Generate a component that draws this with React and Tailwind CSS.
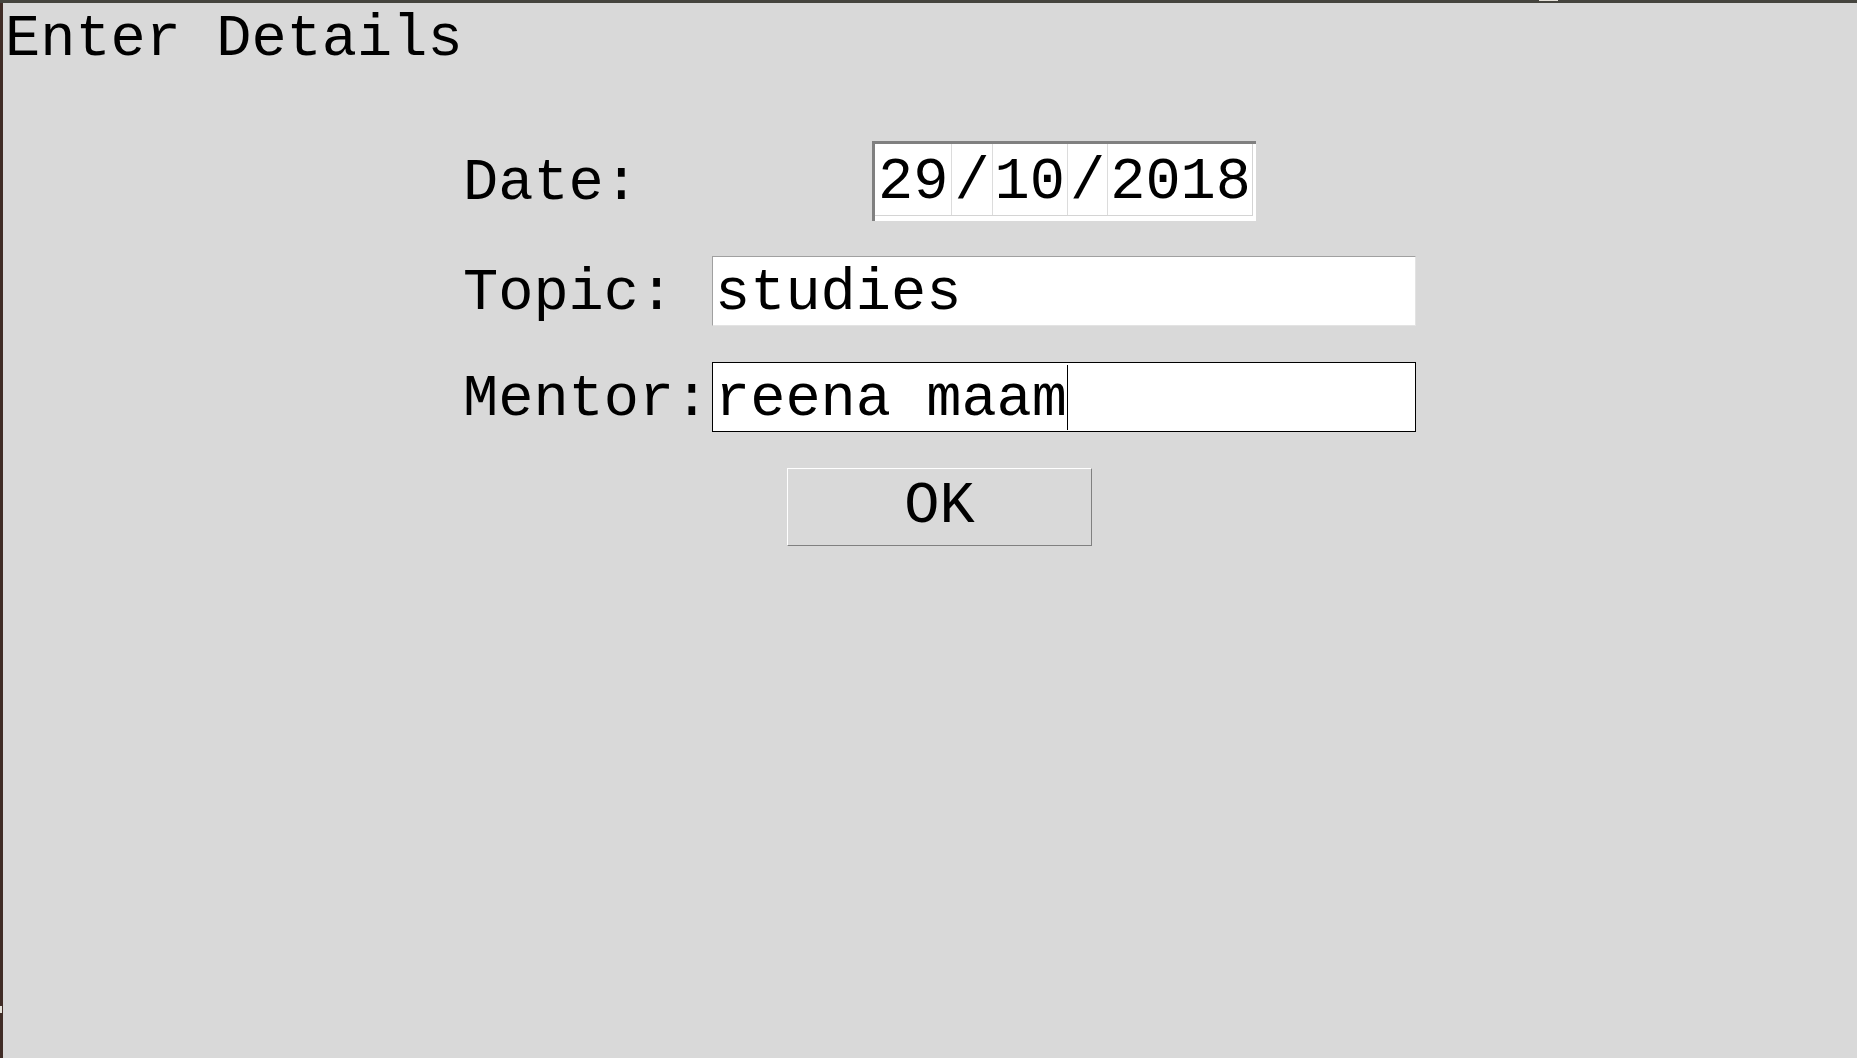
// App.jsx - "Enter Details" dialog (Tk-style form)
const mono =
  "font-['Courier_New','Nimbus_Mono_PS','Nimbus_Mono_L','FreeMono','Courier_10_Pitch','Liberation_Mono',monospace] text-[58.67px] leading-[66px] text-black";

const dateParts = [
  { text: "29", className: "px-[3px] border-r border-[#dcdcdc]" },
  { text: "/", className: "px-[2px] border-r border-[#dcdcdc]" },
  { text: "10", className: "px-[2px] border-r border-[#dcdcdc]" },
  { text: "/", className: "px-[2px] border-r border-[#dcdcdc]" },
  { text: "2018", className: "flex-1 px-[2px]" },
];

function Label({ children }) {
  return <div className={`w-[249px] shrink-0 mt-[6px] whitespace-pre ${mono}`}>{children}</div>;
}

export default function App() {
  return (
    <div className="h-screen w-full flex flex-col bg-[#d9d9d9] overflow-hidden">
      {/* window frame, top */}
      <div className="h-[3px] w-full shrink-0 flex bg-[#45443e]">
        <div className="w-[1539px] shrink-0" />
        <div className="w-[19px] h-[1px] bg-[#e6e2da]" />
      </div>

      <div className="flex-1 flex min-h-0">
        {/* window frame, left */}
        <div className="w-[3px] shrink-0 flex flex-col bg-[#402c26]">
          <div className="h-[1003px] shrink-0" />
          <div className="w-[2px] h-[7px] bg-[#e6e2da]" />
        </div>

        <div className="flex-1 flex flex-col">
          {/* Title */}
          <div className={`pt-[4px] pl-[2px] whitespace-pre ${mono}`}>Enter Details</div>

          {/* Form grid */}
          <div className="mt-[68px] pl-[460px] flex flex-col w-fit">
            {/* Date row */}
            <div className="flex items-center h-[80px]">
              <Label>Date:</Label>
              <div className="w-[704px] flex justify-center">
                <div className="w-[384px] h-[80px] flex flex-col bg-white border-t-[3px] border-l-[3px] border-[#808080] pr-[3px] pb-[5px]">
                  <div className="flex flex-1 border-r border-b border-[#d4d4d4] overflow-hidden">
                    {dateParts.map((part, index) => (
                      <div key={index} className={`pt-[6px] whitespace-pre ${mono} ${part.className}`}>
                        {part.text}
                      </div>
                    ))}
                  </div>
                </div>
              </div>
            </div>

            {/* Topic row */}
            <div className="flex items-center h-[70px] mt-[35px]">
              <Label>Topic:</Label>
              <div className="w-[704px] h-[70px] flex items-center bg-white border-t border-l border-t-[#a0a0a0] border-l-[#a0a0a0] border-b border-r border-b-[#e3e3e3] border-r-[#e3e3e3] pl-[2px]">
                <span className={`mt-[6px] whitespace-pre ${mono}`}>studies</span>
              </div>
            </div>

            {/* Mentor row */}
            <div className="flex items-center h-[70px] mt-[36px]">
              <Label>Mentor:</Label>
              <div className="w-[704px] h-[70px] flex items-center bg-white border border-black pl-[2px]">
                <span className={`mt-[6px] whitespace-pre ${mono}`}>reena maam</span>
                <div className="w-px h-[65px] bg-black" />
              </div>
            </div>

            {/* OK button */}
            <div className="flex justify-center mt-[36px]">
              <button
                type="button"
                className={`w-[305px] h-[78px] flex items-center justify-center bg-[#d9d9d9] border-t border-l border-white border-b border-r border-b-[#808080] border-r-[#808080] ${mono}`}
              >
                OK
              </button>
            </div>
          </div>
        </div>
      </div>
    </div>
  );
}
